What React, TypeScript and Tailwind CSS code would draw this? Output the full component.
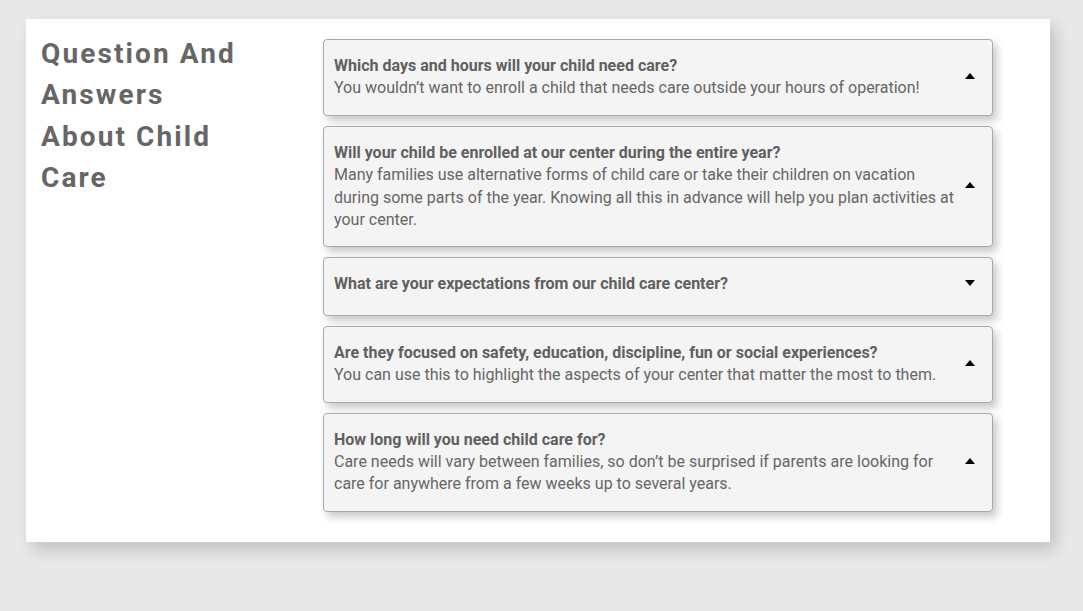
import React from 'react';

const faqs = [
  {
    q: 'Which days and hours will your child need care?',
    a: 'You wouldn’t want to enroll a child that needs care outside your hours of operation!',
    open: true,
  },
  {
    q: 'Will your child be enrolled at our center during the entire year?',
    a: 'Many families use alternative forms of child care or take their children on vacation during some parts of the year. Knowing all this in advance will help you plan activities at your center.',
    open: true,
  },
  {
    q: 'What are your expectations from our child care center?',
    a: '',
    open: false,
  },
  {
    q: 'Are they focused on safety, education, discipline, fun or social experiences?',
    a: 'You can use this to highlight the aspects of your center that matter the most to them.',
    open: true,
  },
  {
    q: 'How long will you need child care for?',
    a: 'Care needs will vary between families, so don’t be surprised if parents are looking for care for anywhere from a few weeks up to several years.',
    open: true,
  },
];

function Caret({ up }: { up: boolean }) {
  return (
    <svg width="10" height="6" viewBox="0 0 10 6" className="block">
      {up ? <polygon points="5,0 10,6 0,6" fill="#000" /> : <polygon points="0,0 10,0 5,6" fill="#000" />}
    </svg>
  );
}

export default function App() {
  return (
    <div className="min-h-[611px] w-full bg-[#e8e8e8] pt-[19px] font-['Roboto',sans-serif]">
      <section className="ml-[26px] flex w-[1024px] bg-white pb-[30px] shadow-[6px_8px_14px_rgba(0,0,0,0.16)]">
        {/* Title */}
        <div className="w-[297px] shrink-0 pl-[15px] pt-[14px]">
          <h2 className="w-[205px] text-[28px] font-bold leading-[41.3px] tracking-[2.1px] text-[#666]">
            Question And Answers About Child Care
          </h2>
        </div>

        {/* Accordion */}
        <div className="mt-[20px] flex w-[670px] flex-col gap-[10px]">
          {faqs.map((f) => (
            <div
              key={f.q}
              className={`flex items-center rounded-[4px] border border-[#a9a9a9] bg-[#f4f4f4] pl-[10px] pr-[16px] pt-[15px] shadow-[4px_5px_8px_rgba(0,0,0,0.22)] ${
                f.open ? 'pb-[15px]' : 'pb-[19px]'
              }`}
            >
              <div className="w-[626px] text-[16px] leading-[22.4px] text-[#666]">
                <div className="font-bold text-[#606060]">{f.q}</div>
                {f.a && <div>{f.a}</div>}
              </div>
              <div className="ml-[5px] -mt-[3px]">
                <Caret up={f.open} />
              </div>
            </div>
          ))}
        </div>
      </section>
    </div>
  );
}
